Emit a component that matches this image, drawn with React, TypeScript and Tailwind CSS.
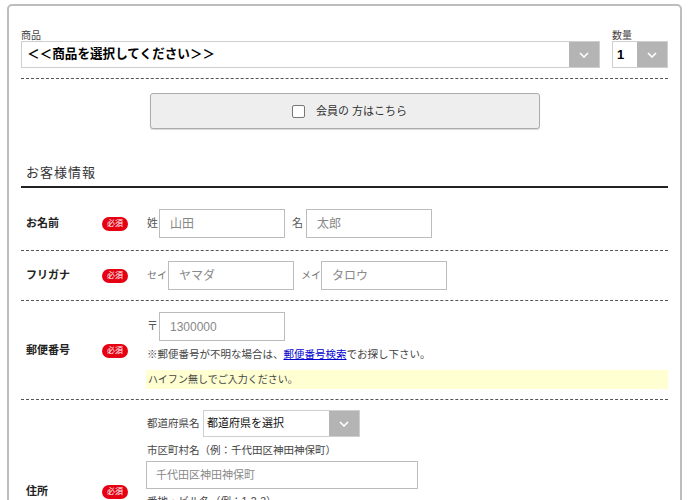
import React from 'react'

const font = '"Liberation Sans", "Noto Sans CJK JP", sans-serif'

function Chevron() {
  return (
    <svg width="10" height="6" viewBox="0 0 10 6" fill="none">
      <polyline points="1,1 5,5 9,1" stroke="#fff" strokeWidth="1.6" />
    </svg>
  )
}

function SelectBox({ text, className, textClass }: { text: string; className: string; textClass: string }) {
  return (
    <div className={`flex border border-[#cfcfcf] bg-white ${className}`}>
      <div className={`flex-1 flex items-center overflow-hidden whitespace-nowrap ${textClass}`}>{text}</div>
      <div className="w-[30px] bg-[#b4b4b4] flex items-center justify-center">
        <Chevron />
      </div>
    </div>
  )
}

function TextInput({ placeholder, width }: { placeholder: string; width: string }) {
  return (
    <div className={`${width} h-[29px] shrink-0 border border-[#bcbcbc] bg-white flex items-center pl-[10px] text-[12px] text-[#888]`}>
      {placeholder}
    </div>
  )
}

function Badge() {
  return (
    <span className="w-[26px] h-[14px] rounded-full bg-[#e50012] text-white text-[8px] leading-[14px] text-center shrink-0">
      必須
    </span>
  )
}

function Row({ label, className, children }: { label: string; className: string; children: React.ReactNode }) {
  return (
    <div className={`flex items-center border-b border-dashed border-[#555] ${className}`}>
      <div className="w-[81px] pl-[5px] text-[11px] font-bold text-[#222] shrink-0">{label}</div>
      <Badge />
      <div className="ml-[18px] flex-1">{children}</div>
    </div>
  )
}

export default function App() {
  return (
    <div className="min-h-[500px] bg-white pl-[7px] pt-[4px]" style={{ fontFamily: font }}>
      <div className="w-[675px] border-2 border-[#bdbdbd] rounded-[5px] px-[12px] pt-[24px] pb-6">
        {/* product + quantity */}
        <div className="flex gap-[12px]">
          <div className="flex-1">
            <div className="text-[10px] leading-[11px] text-[#444]">商品</div>
            <SelectBox
              text="＜＜商品を選択してください＞＞"
              className="h-[27px]"
              textClass="pl-[5px] text-[12.6px] font-bold text-black"
            />
          </div>
          <div className="w-[56px]">
            <div className="text-[10px] leading-[11px] text-[#444]">数量</div>
            <SelectBox text="1" className="h-[27px]" textClass="pl-[4px] text-[13px] font-bold text-black" />
          </div>
        </div>

        <div className="mt-[10px] border-t border-dashed border-[#555]" />

        <div className="mt-[14px] mx-auto w-[390px] h-[36px] pl-[10px] bg-[#eeeeee] border border-[#acacac] rounded-[3px] shadow-[0_1px_1px_rgba(0,0,0,0.15)] flex items-center justify-center gap-[11px]">
          <span className="w-[13px] h-[13px] border border-[#777] rounded-[2px] bg-white" />
          <span className="text-[11px] text-[#333]">会員の 方はこちら</span>
        </div>

        <div className="mt-[35px] pl-[5px] pb-[4px] text-[13px] leading-[18px] tracking-[1px] text-[#333] border-b-2 border-[#222]">
          お客様情報
        </div>

        <Row label="お名前" className="pt-[21px] pb-[12px]">
          <div className="flex items-center text-[11px] text-[#555] whitespace-nowrap">
            <span className="w-[13px] pl-[1px]">姓</span>
            <TextInput placeholder="山田" width="w-[126px]" />
            <span className="ml-[7px] w-[14px]">名</span>
            <TextInput placeholder="太郎" width="w-[126px]" />
          </div>
        </Row>

        <Row label="フリガナ" className="py-[10px]">
          <div className="flex items-center text-[10px] text-[#777] whitespace-nowrap">
            <span className="w-[22px] shrink-0 pl-[1px]">セイ</span>
            <TextInput placeholder="ヤマダ" width="w-[126px]" />
            <span className="ml-[7px] w-[20px] shrink-0">メイ</span>
            <TextInput placeholder="タロウ" width="w-[126px]" />
          </div>
        </Row>

        <Row label="郵便番号" className="pt-[11px] pb-[10px]">
          <div className="flex items-center text-[11px] text-[#555]">
            <span className="w-[13px] pl-[1px]">〒</span>
            <TextInput placeholder="1300000" width="w-[126px]" />
          </div>
          <div className="mt-[5px] pl-[1px] text-[10.5px] leading-[16px] text-[#444]">
            ※郵便番号が不明な場合は、
            <span className="text-[#0000cc] underline">郵便番号検索</span>
            でお探し下さい。
          </div>
          <div className="mt-[8px] h-[19px] bg-[#ffffd2] pl-[2px] flex items-center text-[10px] text-[#444]">
            ハイフン無しでご入力ください。
          </div>
        </Row>

        <Row label="住所" className="pt-[10px] pb-[14px]">
          <div className="flex items-center">
            <span className="w-[57px] pl-[1px] text-[10.5px] text-[#444]">都道府県名</span>
            <SelectBox text="都道府県を選択" className="w-[157px] h-[27px]" textClass="pl-[3px] text-[11px] text-[#111]" />
          </div>
          <div className="mt-[5px] pl-[1px] text-[10.5px] leading-[16px] text-[#444]">市区町村名（例：千代田区神田神保町）</div>
          <div className="mt-[3px] w-[272px] h-[28px] border border-[#bcbcbc] flex items-center pl-[9px] text-[11px] text-[#888]">
            千代田区神田神保町
          </div>
          <div className="mt-[4px] pl-[1px] text-[10.5px] leading-[16px] text-[#444]">番地・ビル名（例：1-2-3）</div>
          <div className="mt-[3px] w-[272px] h-[28px] border border-[#bcbcbc] flex items-center pl-[9px] text-[11px] text-[#888]">
            1-2-3
          </div>
          <div className="mt-[5px] w-[272px] h-[28px] border border-[#bcbcbc]" />
        </Row>
      </div>
    </div>
  )
}
